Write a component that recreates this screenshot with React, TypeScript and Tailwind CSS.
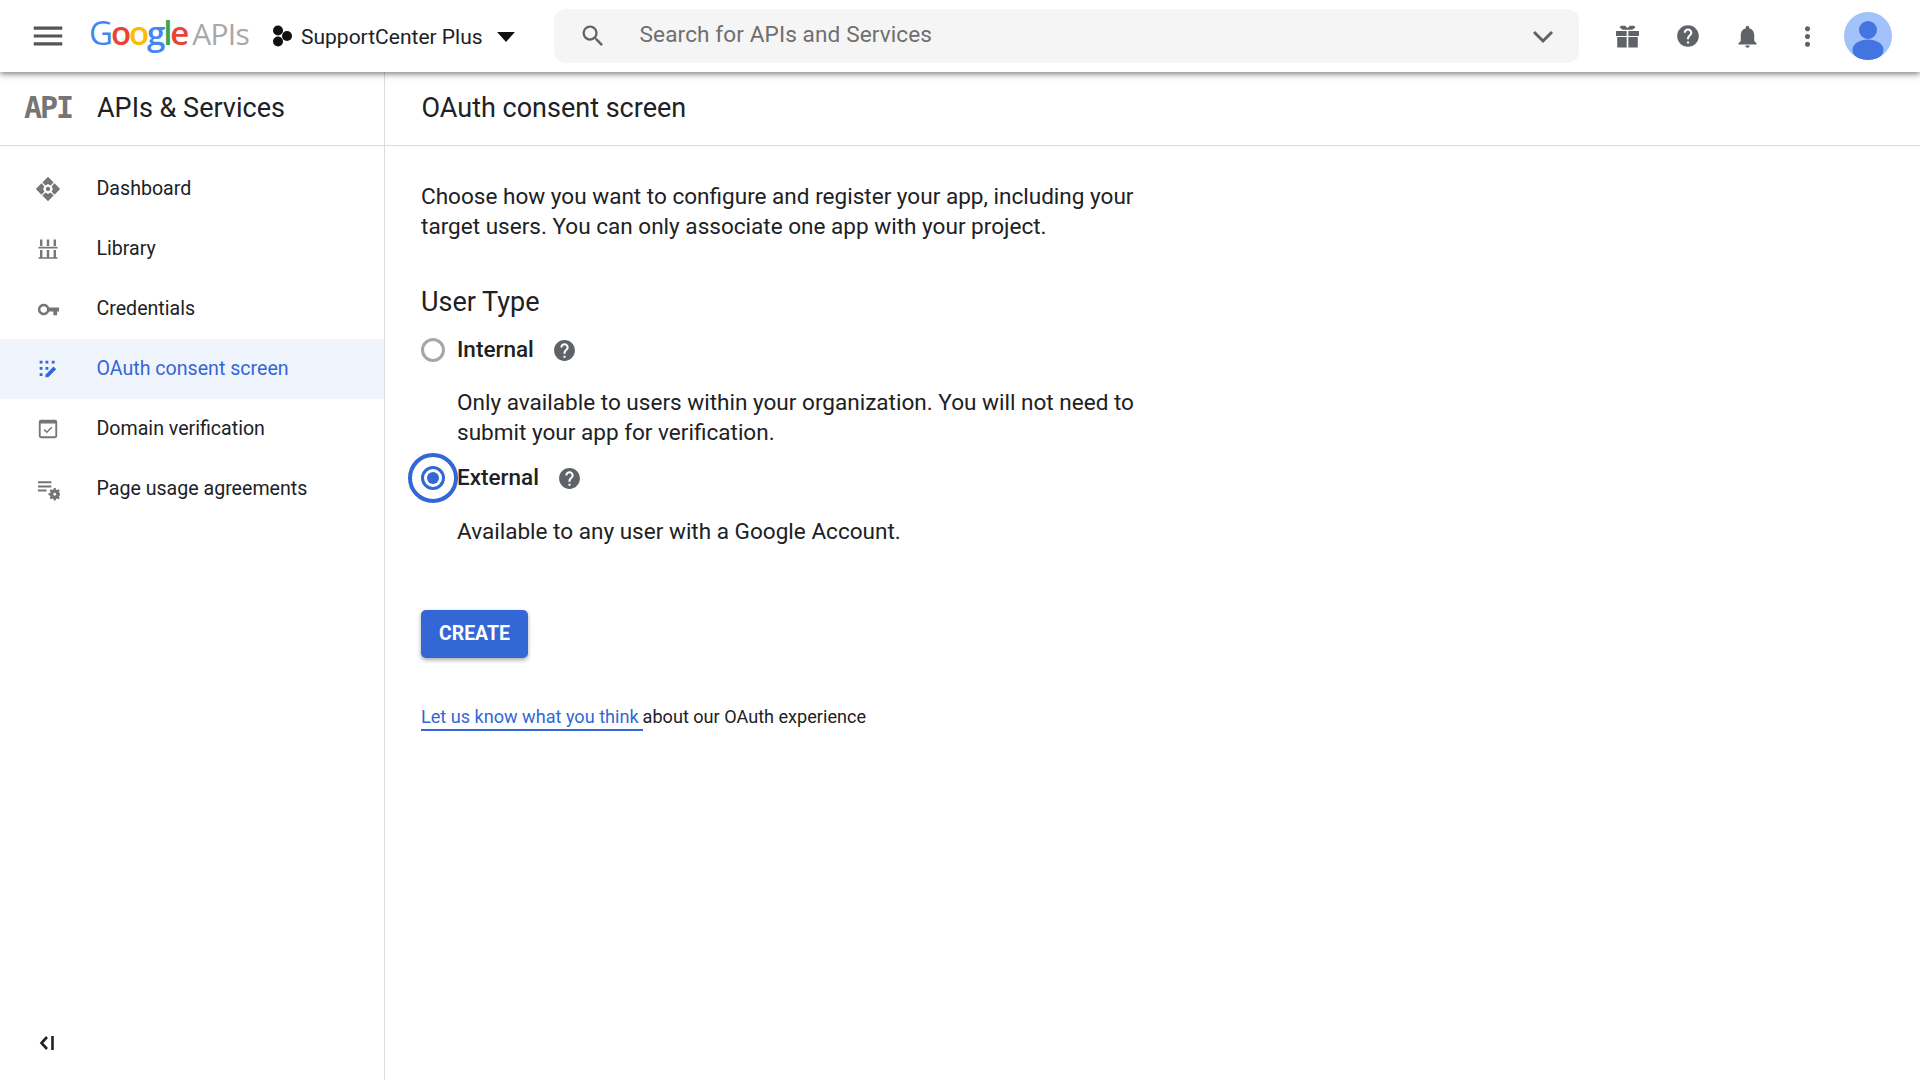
import React from "react";

const HELP = "M12 2C6.48 2 2 6.48 2 12s4.48 10 10 10 10-4.48 10-10S17.52 2 12 2zm1 17h-2v-2h2v2zm2.07-7.75l-.9.92C13.45 12.9 13 13.5 13 15h-2v-.5c0-1.1.45-2.1 1.17-2.83l1.24-1.26c.37-.36.59-.86.59-1.41 0-1.1-.9-2-2-2s-2 .9-2 2H8c0-2.21 1.79-4 4-4s4 1.79 4 4c0 .88-.36 1.68-.93 2.25z";

function Ico({ size, d, color = "#5f6368", children }: { size: number; d?: string; color?: string; children?: React.ReactNode }) {
  return (
    <svg width={size} height={size} viewBox="0 0 24 24" fill={color} className="block shrink-0">
      {d ? <path d={d} /> : children}
    </svg>
  );
}

function GoogleLogo() {
  return (
    <div className="flex items-baseline font-['Open_Sans',sans-serif] text-[33px] leading-none tracking-[-2.1px]">
      <span className="font-medium text-[#4285f4]">G</span>
      <span className="font-semibold text-[#ea4335]">o</span>
      <span className="font-semibold text-[#fbbc05]">o</span>
      <span className="font-semibold text-[#4285f4]">g</span>
      <span className="font-semibold text-[#34a853]">l</span>
      <span className="font-semibold text-[#ea4335]">e</span>
      <span className="ml-[5px] text-[30px] font-normal tracking-[-0.7px] text-[#a8a8a8]">APIs</span>
    </div>
  );
}

function TopIcon({ children }: { children: React.ReactNode }) {
  return <div className="flex w-[60px] justify-center">{children}</div>;
}

const ARROW = "M12 .8l5.2 5.2-2.9 2.7L12 7.4 9.7 8.7 6.8 6z";

const NAV: { label: string; icon: React.ReactNode; active?: boolean }[] = [
  {
    label: "Dashboard",
    icon: (
      <Ico size={26} color="#757575">
        <path d={ARROW} />
        <path d={ARROW} transform="rotate(90 12 12)" />
        <path d={ARROW} transform="rotate(180 12 12)" />
        <path d={ARROW} transform="rotate(270 12 12)" />
        <circle cx="12" cy="12" r="2" />
      </Ico>
    ),
  },
  {
    label: "Library",
    icon: (
      <Ico size={24} color="#757575">
        <path d="M4 2.5h2.4v6.6H4zM10.8 2.5h2.4v6.6h-2.4zM17.6 2.5H20v6.6h-2.4zM2.5 9.8h19v1.6h-19zM4 13h2.4v7.2H4zM10.8 13h2.4v7.2h-2.4zM17.6 13H20v7.2h-2.4zM2.5 20.2h19v1.6h-19z" />
      </Ico>
    ),
  },
  {
    label: "Credentials",
    icon: <Ico size={23} color="#757575" d="M12.65 10C11.83 7.67 9.61 6 7 6c-3.31 0-6 2.69-6 6s2.69 6 6 6c2.61 0 4.83-1.67 5.65-4H17v4h4v-4h2v-4H12.65zM7 15.5c-1.93 0-3.5-1.57-3.5-3.5S5.07 8.5 7 8.5s3.5 1.57 3.5 3.5-1.57 3.5-3.5 3.5z" />,
  },
  {
    label: "OAuth consent screen",
    active: true,
    icon: (
      <Ico size={20} color="#3367d6">
        <path d="M2 2h3.4v3.4H2zM9 2h3.4v3.4H9zM16.5 2h3.4v3.4h-3.4zM2 9.5h3.4v3.4H2zM9 9.5h3.4v3.4H9zM2 17h3.4v3.4H2z" />
        <path d="M9 22v-3.2L18.6 9l3.2 3.2L12.2 22z" />
      </Ico>
    ),
  },
  {
    label: "Domain verification",
    icon: (
      <Ico size={20} color="#757575">
        <path fillRule="evenodd" d="M3.5 1H20.5a2.5 2.5 0 0 1 2.5 2.5V20.5a2.5 2.5 0 0 1-2.5 2.5H3.5A2.5 2.5 0 0 1 1 20.5V3.5A2.5 2.5 0 0 1 3.5 1zM3.2 5.5V20.8H20.8V5.5z" />
        <path d="M10.6 17.2l-3.8-3.8 1.3-1.3 2.5 2.5 5.3-5.3 1.3 1.3z" />
      </Ico>
    ),
  },
  {
    label: "Page usage agreements",
    icon: (
      <Ico size={23} color="#757575">
        <path d="M1 3.5h14v2H1zM1 7.8h14v2H1zM1 12.1h9v2H1z" />
        <path fillRule="evenodd" d="M17.5 10.5h2l.3 1.6 1.2.5 1.4-.9 1.4 1.4-.9 1.4.5 1.2 1.6.3v2l-1.6.3-.5 1.2.9 1.4-1.4 1.4-1.4-.9-1.2.5-.3 1.6h-2l-.3-1.6-1.2-.5-1.4.9-1.4-1.4.9-1.4-.5-1.2-1.6-.3v-2l1.6-.3.5-1.2-.9-1.4 1.4-1.4 1.4.9 1.2-.5zM18.5 15.5a1.5 1.5 0 100 3 1.5 1.5 0 000-3z" />
      </Ico>
    ),
  },
];

function Radio({ checked }: { checked?: boolean }) {
  return (
    <div className="relative h-6 w-6 shrink-0">
      {checked && <div className="absolute -left-[13px] -top-[13px] h-[50px] w-[50px] rounded-full border-4 border-[#3367d6]" />}
      <div className={`flex h-6 w-6 items-center justify-center rounded-full border-[3px] ${checked ? "border-[#3367d6]" : "border-[#a6a6a6]"}`}>
        {checked && <div className="h-3 w-3 rounded-full bg-[#3367d6]" />}
      </div>
    </div>
  );
}

export default function App() {
  return (
    <div className="flex h-[1080px] w-[1920px] flex-col overflow-hidden bg-white font-['Roboto',sans-serif] text-[#202124]">
      <header className="relative z-10 flex h-[72px] shrink-0 items-center bg-white shadow-[0_2px_6px_rgba(0,0,0,0.5)]">
        <div className="ml-[29px] mr-[22px]">
          <Ico size={38} color="#555" d="M3 18h18v-2H3v2zm0-5h18v-2H3v2zm0-7v2h18V6H3z" />
        </div>
        <div className="mb-[7px] w-[158px]">
          <GoogleLogo />
        </div>
        <div className="ml-[25px] flex items-center">
          <svg width="20" height="22" viewBox="0 0 20 22" className="block" fill="#111">
            <circle cx="6" cy="5.5" r="5" />
            <circle cx="6" cy="16.5" r="5" />
            <circle cx="15" cy="11" r="5" />
          </svg>
          <span className="ml-[9px] mt-[3px] text-[21px] leading-none">SupportCenter Plus</span>
          <svg width="18" height="10" viewBox="0 0 16 9" className="ml-[14px] mt-[1px] block" fill="#111">
            <path d="M0 0h16L8 9z" />
          </svg>
        </div>
        <div className="ml-[39px] mb-[1px] flex h-[54px] w-[1025px] items-center rounded-[12px] bg-[#f5f5f5]">
          <div className="ml-[25px]">
            <Ico size={28} color="#5f6368" d="M15.5 14h-.79l-.28-.27A6.47 6.47 0 0 0 16 9.5 6.5 6.5 0 1 0 9.5 16c1.61 0 3.09-.59 4.23-1.57l.27.28v.79l5 4.99L20.49 19l-4.99-5zm-6 0C7.01 14 5 11.99 5 9.5S7.01 5 9.5 5 14 7.01 14 9.5 11.99 14 9.5 14z" />
          </div>
          <span className="ml-[33px] mb-[2px] text-[22.6px] tracking-[0.1px] text-[#6f6f6f]">Search for APIs and Services</span>
          <svg width="22" height="14" viewBox="0 0 22 14" className="ml-auto mr-[25px] mt-[2px] block" fill="none" stroke="#5f6368" strokeWidth="3">
            <path d="M2 2l9 9 9-9" />
          </svg>
        </div>
        <div className="ml-[19px] flex items-center">
          <TopIcon>
            <Ico size={29}>
              <path d="M2.5 7.5h8.8v4H2.5zM12.7 7.5h8.8v4h-8.8zM3.5 12.5h7.8V21H3.5zM12.7 12.5h7.8V21h-7.8z" />
              <path d="M6.5 3h3.5l2 2 2-2h3.5l1 1.5-2.5 2h-8L5.5 4.5z" />
            </Ico>
          </TopIcon>
          <TopIcon>
            <Ico size={26} d={HELP} />
          </TopIcon>
          <TopIcon>
            <Ico size={27} d="M12 22c1.1 0 2-.9 2-2h-4c0 1.1.89 2 2 2zm6-6v-5c0-3.07-1.64-5.64-4.5-6.32V4c0-.83-.67-1.5-1.5-1.5s-1.5.67-1.5 1.5v.68C7.63 5.36 6 7.92 6 11v5l-2 2v1h16v-1l-2-2z" />
          </TopIcon>
          <TopIcon>
            <Ico size={31} d="M12 8c1.1 0 2-.9 2-2s-.9-2-2-2-2 .9-2 2 .9 2 2 2zm0 2c-1.1 0-2 .9-2 2s.9 2 2 2 2-.9 2-2-.9-2-2-2zm0 6c-1.1 0-2 .9-2 2s.9 2 2 2 2-.9 2-2-.9-2-2-2z" />
          </TopIcon>
        </div>
        <svg width="48" height="48" viewBox="0 0 48 48" className="ml-[6px] block">
          <defs>
            <clipPath id="av">
              <circle cx="24" cy="24" r="24" />
            </clipPath>
          </defs>
          <circle cx="24" cy="24" r="24" fill="#a1c2fa" />
          <g clipPath="url(#av)" fill="#4374e0">
            <circle cx="24" cy="18" r="9" />
            <ellipse cx="24" cy="38" rx="15.5" ry="10.5" />
          </g>
        </svg>
      </header>

      <div className="flex h-[74px] shrink-0 border-b border-[#dadce0]">
        <div className="flex w-[385px] shrink-0 items-center border-r border-[#dadce0] pb-[1px]">
          <span className="ml-[24px] w-[73px] font-['DejaVu_Sans_Mono',monospace] text-[30px] font-bold leading-none tracking-[-2px] text-[#757575]">API</span>
          <span className="text-[27px] leading-none">APIs &amp; Services</span>
        </div>
        <div className="flex items-center pb-[1px] pl-[36.5px] text-[27px] leading-none">OAuth consent screen</div>
      </div>

      <div className="flex min-h-0 flex-1">
        <aside className="flex w-[385px] shrink-0 flex-col border-r border-[#dadce0] pt-[13px]">
          {NAV.map((n) => (
            <div key={n.label} className={`flex h-[60px] items-center ${n.active ? "bg-[#f0f4fd] text-[#3367d6]" : ""}`}>
              <div className="flex w-[96.5px] justify-center">{n.icon}</div>
              <span className="text-[19.6px] leading-none">{n.label}</span>
            </div>
          ))}
          <div className="ml-[38px] mt-auto mb-[28px]">
            <svg width="18" height="18" viewBox="0 0 18 18" fill="none" stroke="#202124" strokeWidth="2.6" className="block">
              <path d="M9 3L3.5 9 9 15" />
              <path d="M14.5 2v14" />
            </svg>
          </div>
        </aside>

        <main className="pl-[36px] pt-[36px]">
          <p className="w-[730px] text-[22.55px] leading-[30px]">
            Choose how you want to configure and register your app, including your target users. You can only associate one app with your project.
          </p>
          <h2 className="mt-[44px] text-[27px] leading-[32px]">User Type</h2>
          <div className="mt-[17px] flex h-[30px] items-center">
            <Radio />
            <span className="ml-[12px] text-[22.5px] font-medium">Internal</span>
            <div className="ml-[18px]"><Ico size={25} d={HELP} /></div>
          </div>
          <p className="ml-[36px] mt-[23px] w-[730px] text-[22.55px] leading-[30px]">
            Only available to users within your organization. You will not need to submit your app for verification.
          </p>
          <div className="mt-[15px] flex h-[30px] items-center">
            <Radio checked />
            <span className="ml-[12px] text-[22.5px] font-medium">External</span>
            <div className="ml-[18px]"><Ico size={25} d={HELP} /></div>
          </div>
          <p className="ml-[36px] mt-[24px] text-[22.55px] leading-[30px]">Available to any user with a Google Account.</p>
          <button className="mt-[63px] flex h-[48px] w-[107px] items-center justify-center rounded-[5px] bg-[#3367d6] text-[19.4px] font-bold text-white shadow-[0_2px_4px_rgba(0,0,0,0.35)]">
            CREATE
          </button>
          <p className="mt-[47px] text-[18.1px] leading-[24px]">
            <span className="inline-block border-b-2 border-[#3367d6] pr-[4px] text-[#3367d6]">Let us know what you think</span>
            <span>about our OAuth experience</span>
          </p>
        </main>
      </div>
    </div>
  );
}
